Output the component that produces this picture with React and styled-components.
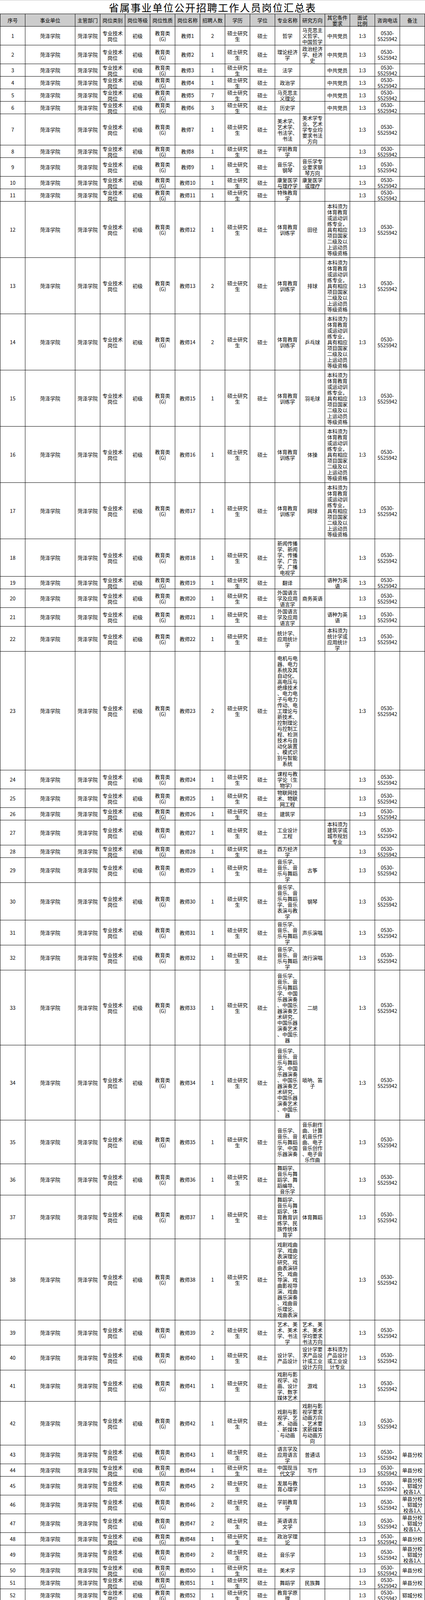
import React from "react";
import styled, { createGlobalStyle } from "styled-components";

const GlobalStyle = createGlobalStyle`
  html, body { margin: 0; padding: 0; background: #fff; }
  body { font-family: "Noto Sans CJK SC", "Noto Sans", sans-serif; color: #000; }
`;

const COLS = "65px 128px repeat(14, 64px)";

const Page = styled.div`
  width: 1089px;
  background: #fff;
`;

const Title = styled.div`
  height: 35px;
  box-sizing: border-box;
  border-top: 1px solid #c4c4c4;
  padding-top: 2px;
  display: flex;
  align-items: center;
  justify-content: center;
  font-size: 26px;
  line-height: 30px;
  letter-spacing: 2px;
  font-weight: 400;
`;

const Sheet = styled.div`
  display: flex;
  flex-direction: column;
`;

const Row = styled.div`
  flex: none;
  display: grid;
  grid-template-columns: ${COLS};
  grid-template-rows: minmax(0, 1fr);
  height: ${(p) => p.$h}px;
  box-sizing: border-box;
  overflow: hidden;
`;

const HeadRow = styled(Row)`
  background: #cccccc;
  border-top: 1px solid #000;
`;

const Cell = styled.div`
  position: relative;
  min-height: 0;
  box-sizing: border-box;
  border-right: 1px solid #000;
  border-bottom: 1px solid #000;
  border-left: ${(p) => (p.$first ? "1px solid #000" : "none")};
  overflow: hidden;
  display: flex;
  align-items: center;
  justify-content: center;
  padding: 0 ${(p) => (p.$tight ? 1 : 4)}px;
  font-size: 13px;
  line-height: 15px;
  text-align: center;
  white-space: pre-wrap;
  line-break: anywhere;
  word-break: break-all;
  &::before {
    content: "";
    display: ${(p) => (p.$flag ? "block" : "none")};
    position: absolute;
    top: 0;
    left: 0;
    border-top: 5px solid #0a8a0a;
    border-right: 5px solid transparent;
  }
`;

const Text = styled.span`
  display: block;
  width: 100%;
  flex: none;
`;

const HEAD = [
  "序号", "事业单位", "主管部门", "岗位类别", "岗位等级", "岗位性质", "岗位名称",
  "招聘人数", "学历", "学位", "专业名称", "研究方向", "其它条件要求", "面试\n比例",
  "咨询电话", "备注",
];

const r = (n, name, count, major, dir, other, note, h, ratio = "1:3", flag = false) => ({
  n, name, count, major, dir, other, note, h, ratio, flag,
});

const PE = "本科须为体育教育或运动训练专业，具有相应项目国家二级及以上运动员等级资格";
const MU = "音乐学、音乐、音乐与舞蹈学";
const CI = MU + "、中国乐器演奏、中国乐器演奏艺术研究、中国乐器演奏艺术、中国乐器";
const BOTH = "单县分校、郓城分校各1人";
const MX = "马克思主义理论、教育学、心理学";
const CT = "控制科学与工程、计算机科学与技术、兵器科学与技术、军事学类、生物学、公共卫生与预防医学、管理学类";
const LEAD = "中共党员、主要学生干部";

const ROWS = [
  r(1, "教师1", 2, "哲学", "马克思主义哲学、中国哲学", "中共党员", "", 48),
  r(2, "教师2", 1, "理论经济学", "政治经济学、经济史", "中共党员", "", 48),
  r(3, "教师3", 1, "法学", "", "中共党员", "", 32),
  r(4, "教师4", 1, "政治学", "", "中共党员", "", 32),
  r(5, "教师5", 7, "马克思主义理论", "", "中共党员", "", 32),
  r(6, "教师6", 3, "历史学", "", "中共党员", "", 32),
  r(7, "教师7", 1, "美术学、艺术学、书法学、书法", "美术学专业、艺术学专业均要求书法方向", "", "", 80),
  r(8, "教师8", 1, "学前教育学", "", "", "", 32),
  r(9, "教师9", 1, "音乐学、钢琴", "音乐学专业要求钢琴方向", "", "", 48),
  r(10, "教师10", 1, "康复医学与理疗学", "康复医学或理疗", "", "", 32),
  r(11, "教师11", 1, "特殊教育学", "", "", "", 32),
  r(12, "教师12", 1, "体育教育训练学", "田径", PE, "", 144),
  r(13, "教师13", 2, "体育教育训练学", "排球", PE, "", 144),
  r(14, "教师14", 2, "体育教育训练学", "乒乓球", PE, "", 144),
  r(15, "教师15", 1, "体育教育训练学", "羽毛球", PE, "", 144),
  r(16, "教师16", 1, "体育教育训练学", "体操", PE, "", 144),
  r(17, "教师17", 1, "体育教育训练学", "网球", PE, "", 144),
  r(18, "教师18", 1, "新闻传播学、新闻学、传播学、广告学、广播电视学", "", "", "", 96),
  r(19, "教师19", 1, "翻译", "", "语种为英语", "", 32),
  r(20, "教师20", 1, "外国语言学及应用语言学", "商务英语", "", "", 48),
  r(21, "教师21", 1, "外国语言学及应用语言学", "", "语种为英语", "", 48),
  r(22, "教师22", 1, "统计学、应用统计学", "", "本科须为统计学或应用统计学", "", 64),
  r(23, "教师23", 2, "电机与电器、电力系统及其自动化、高电压与绝缘技术、电力电子与电力传动、电工理论与新技术、控制理论与控制工程、检测技术与自动化装置、模式识别与智能系统", "", "", "", 304),
  r(24, "教师24", 1, "课程与教学论（生物学）", "", "", "", 48),
  r(25, "教师25", 1, "物联网技术、物联网工程", "", "", "", 48),
  r(26, "教师26", 1, "建筑学", "", "", "", 32),
  r(27, "教师27", 1, "工业设计工程", "", "本科须为建筑学或城市规划专业", "", 64),
  r(28, "教师28", 1, "西方经济学", "", "", "", 32),
  r(29, "教师29", 1, MU, "古筝", "", "", 64),
  r(30, "教师30", 1, MU + "、音乐表演与教学", "钢琴", "", "", 96),
  r(31, "教师31", 1, MU, "声乐演唱", "", "", 64),
  r(32, "教师32", 1, MU, "流行演唱", "", "", 64),
  r(33, "教师33", 1, CI, "二胡", "", "", 192),
  r(34, "教师34", 1, CI, "唢呐、笛子", "", "", 192),
  r(35, "教师35", 1, MU + "、中国乐器演奏", "音乐剧作曲、计算机音乐作曲、电子音乐创作、电子音乐作曲", "", "", 112),
  r(36, "教师36", 1, "舞蹈学、音乐与舞蹈学、舞蹈编导、音乐学", "", "", "", 80),
  r(37, "教师37", 1, "舞蹈学、音乐与舞蹈学、体育教育训练学、民族传统体育学", "体育舞蹈", "", "", 112),
  r(38, "教师38", 1, "戏剧戏曲学、戏曲表演理论研究、戏曲表演研究、戏曲导演、戏曲影视导演、戏曲器乐演奏、戏曲音乐理论、戏曲表演", "", "", "", 208),
  r(39, "教师39", 2, "艺术、美术、美术学、书法学", "艺术、美术、美术学均要求书法方向", "", "", 64),
  r(40, "教师40", 1, "设计学、产品设计", "设计学要求产品设计或工业设计方向", "本科须为产品设计或工业设计专业", "", 64),
  r(41, "教师41", 1, "戏剧与影视学、动画、设计学、数字媒体艺术", "游戏", "", "", 80),
  r(42, "教师42", 1, "戏剧与影视学、艺术、动画、新媒体与动画", "戏剧与影视学要求动画方向、艺术要求新媒体与动画方向", "", "", 112),
  r(43, "教师43", 1, "语言学及应用语言学", "普通话", "", "单县分校", 48),
  r(44, "教师44", 1, "中国现当代文学", "写作", "", "单县分校", 32),
  r(45, "教师45", 2, "发展与教育心理学", "", "", BOTH, 48),
  r(46, "教师46", 2, "学前教育学", "", "", BOTH, 48),
  r(47, "教师47", 2, "英语语言文学", "", "", BOTH, 48),
  r(48, "教师48", 1, "政治学理论", "", "", "单县分校", 32),
  r(49, "教师49", 2, "音乐学", "", "", BOTH, 48),
  r(50, "教师50", 1, "美术学", "", "", "单县分校", 32),
  r(51, "教师51", 1, "舞蹈学", "民族舞", "", "单县分校", 32),
  r(52, "教师52", 1, "教育学原理", "", "", "郓城分校", 32),
  r(53, "教师53", 1, "化学", "", "", "郓城分校", 32),
  r(54, "教师54", 1, "马克思主义哲学", "", "", "郓城分校", 32),
  r(55, "教师55", 1, "中国现当代文学", "", "", "郓城分校", 32),
  r(56, "教师56", 1, "舞蹈学", "", "", "郓城分校", 32),
  r(57, "教师57", 1, "美术学", "书法", "", "郓城分校", 32),
  r(58, "教师58", 1, "体育教育训练学", "", "", "郓城分校", 32),
  r(59, "教辅1（实\n验实训）", 1, "机械工程、机械制造及其自动化、机械电子工程、机械设计及理论、车辆工程", "", "本科须为机械设计制造及其自动化或机械电子工程专业", "", 144),
  r(60, "教辅2（实\n验实训）", 1, "控制科学与工程、控制理论与控制工程、检测技术与自动化装置、系统工程、模式识别与智能系统、导航、制导与控制、电气工程、电机与电器、电力系统及其自动化、高电压与绝缘技术、电力电子与电力传动、电工理论与新技术", "", "本科须为自动化或电气工程及其自动化或电子信息工程专业", "", 416),
  r(61, "教辅3（实\n验）", 1, "工商管理", "", "须有两年及以上本专业工作经历", "", 64),
  r(62, "教辅4", 1, "会计学、会计", "", "", "", 32),
  r(63, "教辅5", 1, "审计", "", "", "", 32),
  r(64, "教辅6", 1, "电力系统及其自动化", "", "本科须为土木类或建筑类专业", "", 64),
  r(65, "教辅7", 3, "计算机科学与技术、中国语言文学、图书馆、情报与档案管理", "", "", "", 112),
  r(66, "教辅8", 1, "计算机科学与技术", "", "中共党员", "", 32),
  r(67, "教辅9", 1, "新闻传播学、汉语言文字学、中国现当代文学", "", "中共党员", "", 80),
  r(68, "辅导员1", 3, MX, "", LEAD + "、限男性", "须入住男生公寓", 64, "1:5"),
  r(69, "辅导员2", 3, MX, "", LEAD + "、限女性", "须入住女生公寓", 64, "1:5"),
  r(70, "辅导员3", 8, "理论经济学、应用经济学、法学、社会学、哲学、教育学、心理学、新闻传播学、艺术学、外国语言文学", "", LEAD, "", 192, "1:5"),
  r(71, "辅导员4", 3, CT, "", LEAD + "、限男性", "须入住男生公寓", 208, "1:5", true),
  r(72, "辅导员5", 3, CT, "", LEAD + "、限女性", "须入住女生公寓", 208, "1:5", true),
  r(73, "辅导员6", 2, "中国语言文学、艺术学", "", LEAD, "郓城分校", 48, "1:5", true),
  r(74, "辅导员7", 2, "中国语言文学、数学", "", LEAD, "单县分校", 48, "1:5", true),
  r(75, "辅导员8", 6, "不限专业", "", LEAD, "", 48, "1:5", true),
];

const PHONE = "0530-\n5525942";

function DataRow({ row }) {
  const cells = [
    row.n, "菏泽学院", "菏泽学院", "专业技术岗位", "初级", "教育类\n(G)", row.name,
    row.count, "硕士研究生", "硕士", row.major, row.dir, row.other, row.ratio,
    PHONE, row.note,
  ];
  return (
    <Row $h={row.h}>
      {cells.map((c, i) => (
        <Cell key={i} $first={i === 0} $tight={i === 6} $flag={i === 0 && row.flag}>
          <Text>{c}</Text>
        </Cell>
      ))}
    </Row>
  );
}

export default function App() {
  return (
    <Page>
      <GlobalStyle />
      <Title>省属事业单位公开招聘工作人员岗位汇总表</Title>
      <Sheet>
        <HeadRow $h={33}>
          {HEAD.map((h, i) => (
            <Cell key={i} $first={i === 0}>
              <Text>{h}</Text>
            </Cell>
          ))}
        </HeadRow>
        {ROWS.map((row) => (
          <DataRow key={row.n} row={row} />
        ))}
      </Sheet>
    </Page>
  );
}
